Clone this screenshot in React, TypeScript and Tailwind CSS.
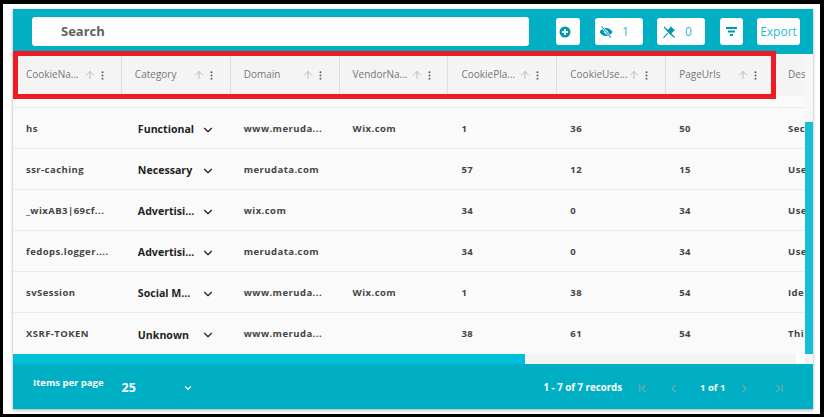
import React from 'react';
import { ChevronDown, ChevronLeft, ChevronRight, ChevronFirst, ChevronLast, ArrowUp, EllipsisVertical } from 'lucide-react';

const COLUMNS = ['CookieNa...', 'Category', 'Domain', 'VendorNa...', 'CookiePla...', 'CookieUse...', 'PageUrls', 'Des'];

const ROWS = [
  ['hs', 'Functional', 'www.meruda...', 'Wix.com', '1', '36', '50', 'Sec'],
  ['ssr-caching', 'Necessary', 'merudata.com', '', '57', '12', '15', 'Use'],
  ['_wixAB3|69cf...', 'Advertisi...', 'wix.com', '', '34', '0', '34', 'Use'],
  ['fedops.logger....', 'Advertisi...', 'merudata.com', '', '34', '0', '34', 'Use'],
  ['svSession', 'Social M...', 'www.meruda...', 'Wix.com', '1', '38', '54', 'Ide'],
  ['XSRF-TOKEN', 'Unknown', 'www.meruda...', '', '38', '61', '54', 'Thi'],
];

function ToolButton({ className, children }: { className: string; children: React.ReactNode }) {
  return (
    <div className={`flex items-center h-[27px] bg-white rounded-[3px] text-[#2dbccd] ${className}`}>
      {children}
    </div>
  );
}

export default function App() {
  return (
    <div className="w-[824px] h-[417px] bg-black pl-[3px] pt-[4px] pr-[4px] pb-[3px] overflow-hidden font-['Open_Sans',sans-serif]">
      <div className="w-full h-full bg-white pl-[10px] pt-[5px] pr-[7px] pb-[1px]">
        <div className="relative w-[800px] h-[400px] flex flex-col bg-[#fafafa] shadow-[0_1px_3px_rgba(0,0,0,0.35)]">
          {/* toolbar */}
          <div className="h-[45px] shrink-0 bg-[#00afc4] flex items-start pt-[8px] pl-[19px]">
            <div className="w-[497px] h-[29px] bg-white rounded-[3px] flex items-center pl-[29px] text-[13px] font-bold text-[#5f5f5f]">
              Search
            </div>
            <ToolButton className="mt-[1px] ml-[27px] w-[24px] pl-[3px]">
              <svg width="12" height="12" viewBox="0 0 12 12">
                <circle cx="6" cy="6" r="5.500" fill="#0098ac" />
                <path d="M6 3v6M3 6h6" stroke="#fff" strokeWidth="2" />
              </svg>
            </ToolButton>
            <ToolButton className="mt-[1px] ml-[15px] w-[48px] pl-[4px] gap-[9px] text-[12px]">
              <svg width="14" height="14" viewBox="0 0 14 14">
                <path d="M0.500 7c1.600-2.800 3.700-4 6.500-4s4.900 1.200 6.500 4c-1.600 2.800-3.700 4-6.500 4S2.100 9.800 0.500 7z" fill="#0098ac" />
                <circle cx="7" cy="7" r="1.800" fill="#fff" />
                <path d="M2.500 1.500l9.500 11" stroke="#fff" strokeWidth="2.400" />
                <path d="M2.500 1.500l9.500 11" stroke="#0098ac" strokeWidth="1.100" />
              </svg>
              <span>1</span>
            </ToolButton>
            <ToolButton className="mt-[1px] ml-[14px] w-[48px] pl-[5px] gap-[9px] text-[12px]">
              <svg width="14" height="14" viewBox="0 0 14 14" fill="none">
                <path d="M8.500 1l4.500 4.500-1.500.8-2 2-.5 2.200L4 5l2.200-.5 2-2z" fill="#0098ac" />
                <path d="M5.800 8.200L1.500 12.800" stroke="#0098ac" strokeWidth="1.200" />
                <path d="M2 2l10.500 10.500" stroke="#0098ac" strokeWidth="1.200" />
              </svg>
              <span>0</span>
            </ToolButton>
            <ToolButton className="mt-[1px] ml-[15px] w-[23px] pl-[6px]">
              <svg width="11" height="9" viewBox="0 0 11 9">
                <path d="M0 0h11v2H0zM2 3.500h7v2H2zM4 7h3v2H4z" fill="#0098ac" />
              </svg>
            </ToolButton>
            <ToolButton className="mt-[1px] ml-[14px] w-[43px] justify-center text-[12px]">Export</ToolButton>
          </div>

          {/* table with vertical scrollbar */}
          <div className="flex h-[300px] shrink-0">
            <div className="w-[792px] overflow-hidden">
              <div className="flex h-[42px] w-[880px] bg-[#f4f4f4]">
                {COLUMNS.map((c) => (
                  <div key={c} className="w-[108.860px] shrink-0 flex items-center pl-[13px] border-r border-[#dedede] text-[10px] text-[#777777]">
                    <span className="w-[58px] mb-[2px] whitespace-nowrap">{c}</span>
                    {c !== 'Des' && (
                      <>
                        <ArrowUp size={12} className="text-[#aaaaaa] shrink-0" strokeWidth={1.500} />
                        <EllipsisVertical size={11} className="text-[#666666] shrink-0 ml-[1px]" strokeWidth={2.500} />
                      </>
                    )}
                  </div>
                ))}
              </div>
              <div className="h-[12px] border-b border-[#ececec]" />
              {ROWS.map((row) => (
                <div key={row[0]} className="flex h-[41px] w-[880px] items-center border-b border-[#ececec] last:border-b-0 text-[9.500px] font-bold text-[#444444] tracking-[0.45px]">
                  {row.map((cell, i) =>
                    i === 1 ? (
                      <div key={i} className="w-[108.860px] shrink-0 flex items-center pl-[16px] pt-[4px] tracking-normal text-[10.600px] font-bold text-[#1f1f1f]">
                        <span className="w-[63px] whitespace-nowrap">{cell}</span>
                        <ChevronDown size={14} strokeWidth={2} />
                      </div>
                    ) : (
                      <div key={i} className="w-[108.860px] shrink-0 pl-[13px] pt-[2px] whitespace-nowrap">
                        {cell}
                      </div>
                    ),
                  )}
                </div>
              ))}
            </div>
            <div className="w-[8px] bg-[#f7f7f7] flex flex-col">
              <div className="h-[68px] shrink-0" />
              <div className="flex-1 bg-[#16bfd6]" />
            </div>
          </div>

          {/* horizontal scrollbar */}
          <div className="flex h-[10px] shrink-0 bg-[#f4f4f4]">
            <div className="w-[512px] bg-[#00bfd8]" />
            <div className="w-[271px]" />
            <div className="w-[9px] bg-white" />
          </div>

          {/* footer */}
          <div className="flex-1 bg-[#00afc4] flex items-center pt-[3px] text-white font-bold">
            <span className="ml-[20px] mb-[9px] text-[9.500px]">Items per page</span>
            <span className="ml-[18px] w-[61px] text-[12.500px]">25</span>
            <ChevronDown size={10} strokeWidth={3} />
            <span className="ml-[351px] text-[9.700px]">1 - 7 of 7 records</span>
            <ChevronFirst size={13} strokeWidth={2} className="ml-[14px] text-[#7da5ad]" />
            <ChevronLeft size={13} strokeWidth={2} className="ml-[18px] text-[#7da5ad]" />
            <span className="ml-[20px] text-[9.500px]">1 of 1</span>
            <ChevronRight size={13} strokeWidth={2} className="ml-[13px] text-[#7da5ad]" />
            <ChevronLast size={13} strokeWidth={2} className="ml-[22px] text-[#7da5ad]" />
          </div>

          {/* red annotation around the header */}
          <div className="absolute left-0 top-[42px] w-[763px] h-[48px] border-[5px] border-[#ed1c24]" />
        </div>
      </div>
    </div>
  );
}
